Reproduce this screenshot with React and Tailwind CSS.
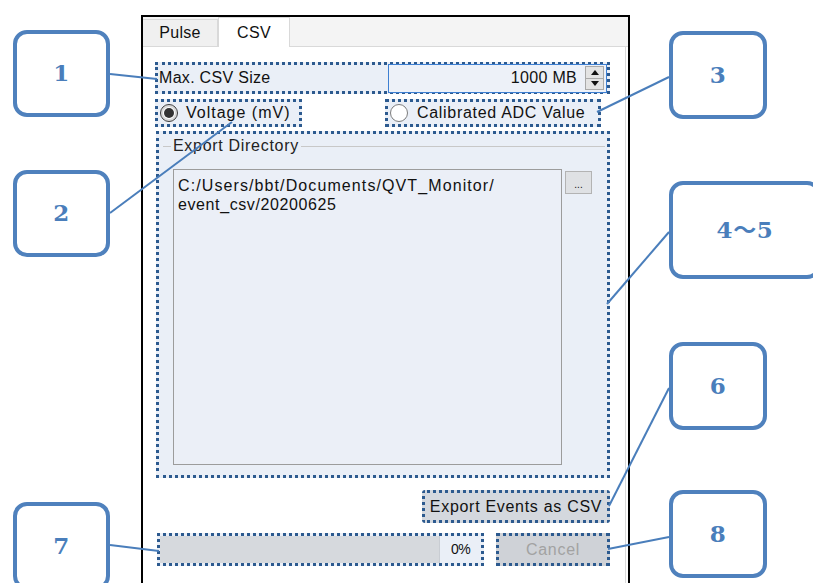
import React from 'react';

const dotted = 'border-[3px] border-dotted border-[#2c5a8f]';

const Callout = ({ label, className }) => (
  <div
    className={`absolute flex items-center justify-center rounded-[14px] border-[4px] border-[#4f81bd] bg-white text-[23px] font-semibold text-[#4a7ebb] font-['DejaVu_Serif','Noto_Sans_CJK_JP',serif] ${className}`}
  >
    {label}
  </div>
);

const Radio = ({ checked }) => (
  <div
    className={`flex h-[18px] w-[18px] items-center justify-center rounded-full border bg-white ${
      checked ? 'border-[#3a3a3a] shadow-[inset_0_0_0_2px_#d9d9d9]' : 'border-[#7d7d7d]'
    }`}
  >
    {checked && <div className="h-[10px] w-[10px] rounded-full bg-[#333]" />}
  </div>
);

export default function App() {
  return (
    <div className="relative h-[583px] w-[813px] overflow-hidden bg-white text-[16px] tracking-[0.7px] text-[#111] font-['Liberation_Sans',Arial,sans-serif]">
      {/* window */}
      <div className="pl-[141px] pt-[15px]">
        <div className="flex h-[600px] w-[489px] flex-col border-x-2 border-t-2 border-black">
          {/* tabs */}
          <div className="flex h-[30px] items-end border-b border-[#d9d9d9] bg-[#f4f4f4]">
            <div className="flex h-[27px] w-[75px] items-center justify-center border-r border-t border-[#d9d9d9] bg-[#f0f0f0] tracking-[0.3px]">
              Pulse
            </div>
            <div className="-mb-px flex h-[30px] w-[72px] items-center justify-center border-x border-t border-[#d9d9d9] bg-white tracking-[0.3px]">
              CSV
            </div>
          </div>

          {/* page */}
          <div className="mr-[2px] flex flex-1 flex-col border-r border-[#d9d9d9] bg-white pl-[12px] pr-[17px] pt-[15px]">
            {/* max csv size */}
            <div className={`-mr-[2px] flex h-[32px] items-center bg-[#eaeff7] ${dotted}`}>
              <span className="pl-[1px] tracking-[0.3px]">Max. CSV Size</span>
              <div className="ml-auto flex h-[29px] w-[219px] items-center border border-[#3d7fd2] bg-[#edf1f8]">
                <span className="ml-auto pr-[8px] tracking-[0.3px]">1000 MB</span>
                <div className="mr-[2px] flex h-[24px] w-[19px] flex-col border border-[#a9a9a9] bg-[#e3e3e3]">
                  <div className="flex flex-1 items-center justify-center border-b border-[#a9a9a9]">
                    <svg width="8" height="5" viewBox="0 0 8 5"><path d="M0 5 L4 0 L8 5 Z" fill="#111" /></svg>
                  </div>
                  <div className="flex flex-1 items-center justify-center">
                    <svg width="8" height="5" viewBox="0 0 8 5"><path d="M0 0 L4 5 L8 0 Z" fill="#111" /></svg>
                  </div>
                </div>
              </div>
            </div>

            {/* radios */}
            <div className="mt-[5px] flex h-[28px]">
              <div className={`flex w-[147px] items-center gap-[8px] bg-[#eaeff7] pl-[2px] ${dotted}`}>
                <Radio checked />
                <span className="tracking-[1px]">Voltage (mV)</span>
              </div>
              <div className={`ml-[83px] flex w-[216px] items-center gap-[9px] bg-[#eaeff7] pl-[2px] ${dotted}`}>
                <Radio />
                <span>Calibrated ADC Value</span>
              </div>
            </div>

            {/* export directory group */}
            <div className={`-mr-[2px] ml-[1px] mt-[4px] flex h-[347px] flex-col bg-[#eaeff7] ${dotted}`}>
              <div className="mt-[2px] flex h-[20px] items-center pl-[4px] pr-[2px]">
                <div className="h-px w-[8px] bg-[#c8c8c8]" />
                <span className="px-[2px] text-[#222]">Export Directory</span>
                <div className="h-px flex-1 bg-[#c8c8c8]" />
              </div>
              <div className="mt-[13px] flex pl-[14px]">
                <div className="h-[296px] w-[389px] border border-[#9c9c9c] bg-[#ebeff7] px-[4px] pt-[6px] leading-[19px] tracking-[0.6px]">
                  <div className="tracking-[1.1px]">C:/Users/bbt/Documents/QVT_Monitor/</div>
                  <div>event_csv/20200625</div>
                </div>
                <div className="ml-[3px] mt-[2px] flex h-[23px] w-[27px] items-end justify-center border border-[#b3b3b3] bg-[#dfe1e4] pb-[3px] text-[10px] leading-none tracking-normal">
                  ...
                </div>
              </div>
            </div>

            {/* export button */}
            <div className="-mr-[2px] mt-[12px] flex justify-end">
              <div className={`flex h-[33px] w-[188px] items-center justify-center rounded-[3px] bg-[#d4d8de] ${dotted}`}>
                Export Events as CSV
              </div>
            </div>

            {/* progress + cancel */}
            <div className="-mr-[2px] mt-[10px] flex h-[33px]">
              <div className={`ml-[2px] flex w-[327px] bg-[#eaeff7] ${dotted}`}>
                <div className="h-full w-[280px] border-r border-[#c9cdd3] bg-[#d6d9dd]" />
                <div className="flex flex-1 items-center justify-center text-[14px] tracking-[-0.5px]">0%</div>
              </div>
              <div className={`ml-auto flex w-[114px] items-center justify-center bg-[#cfd2d7] text-[#a2a2a2] ${dotted}`}>
                Cancel
              </div>
            </div>
          </div>
        </div>
      </div>

      {/* callouts */}
      <Callout label="1" className="left-[13px] top-[30px] h-[87px] w-[97px]" />
      <Callout label="2" className="left-[13px] top-[170px] h-[87px] w-[97px]" />
      <Callout label="3" className="left-[669px] top-[31px] h-[88px] w-[98px]" />
      <Callout label="4〜5" className="left-[669px] top-[181px] h-[98px] w-[152px]" />
      <Callout label="6" className="left-[669px] top-[342px] h-[88px] w-[98px]" />
      <Callout label="7" className="left-[13px] top-[502px] h-[88px] w-[97px]" />
      <Callout label="8" className="left-[669px] top-[490px] h-[88px] w-[98px]" />

      {/* leader lines */}
      <svg className="pointer-events-none absolute left-0 top-0" width="813" height="583">
        <g stroke="#4a7ebb" strokeWidth="2" fill="none">
          <line x1="110" y1="74" x2="157" y2="79" />
          <line x1="110" y1="213" x2="232" y2="122" />
          <line x1="669" y1="77" x2="597" y2="112" />
          <line x1="669" y1="232" x2="607" y2="304" />
          <line x1="669" y1="388" x2="609" y2="506" />
          <line x1="110" y1="545" x2="159" y2="551" />
          <line x1="669" y1="537" x2="608" y2="549" />
        </g>
      </svg>
    </div>
  );
}
